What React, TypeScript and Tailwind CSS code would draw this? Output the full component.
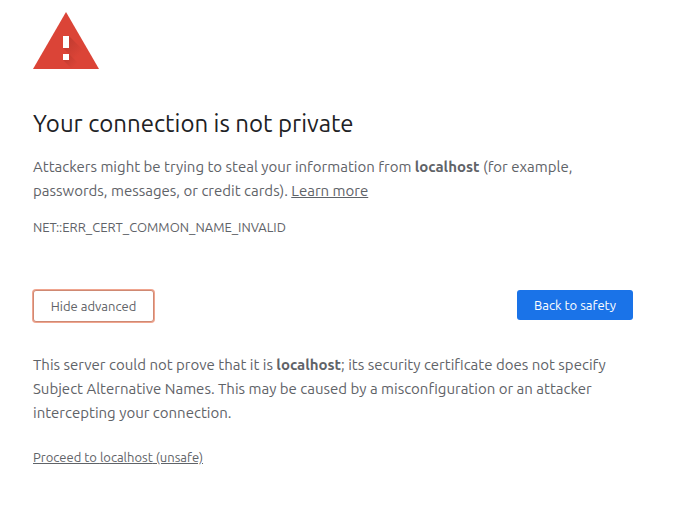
import React, { useState } from 'react';

const HOST = 'localhost';

function WarningIcon() {
  return (
    <svg className="block w-[66px] h-[57px]" viewBox="0 0 66 57" aria-hidden="true">
      <defs>
        <linearGradient id="shade" gradientUnits="userSpaceOnUse" x1="33" y1="30" x2="46" y2="43">
          <stop offset="0" stopColor="#b8382d" />
          <stop offset="1" stopColor="#db4437" />
        </linearGradient>
        <linearGradient id="shadeDot" gradientUnits="userSpaceOnUse" x1="33" y1="45" x2="42" y2="54">
          <stop offset="0" stopColor="#b8382d" />
          <stop offset="1" stopColor="#db4437" />
        </linearGradient>
      </defs>
      <path d="M33 0 66 57H0Z" fill="#db4437" />
      <path d="M36 24 54 42V54H48L30 36Z" fill="url(#shade)" opacity="0.7" />
      <path d="M36 42 51 57H39L30 48Z" fill="url(#shadeDot)" opacity="0.7" />
      <path d="M30 24h6v12h-6zM30 42h6v6h-6z" fill="#fff" />
    </svg>
  );
}

export default function App() {
  const [showDetails, setShowDetails] = useState(true);

  return (
    <div
      className="min-h-screen bg-white pt-3 pb-10 pl-[33px] pr-[47px] text-[15px] leading-6 text-[#5f6368]"
      style={{ fontFamily: 'Ubuntu, "Noto Sans", sans-serif' }}
    >
      <main className="max-w-[600px]">
        <WarningIcon />
        <h1 className="mt-10 text-2xl leading-[30px] text-[#202124]">Your connection is not private</h1>
        <p className="mt-4">
          Attackers might be trying to steal your information from <strong>{HOST}</strong> (for example,{' '}
          passwords, messages, or credit cards).{' '}
          <a href="#learn-more" className="underline">Learn more</a>
        </p>
        <div className="mt-[14px] text-[13px] leading-5">NET::ERR_CERT_COMMON_NAME_INVALID</div>

        <div className="mt-[53px] flex items-start justify-between text-[13px] leading-5">
          <button
            type="button"
            aria-expanded={showDetails}
            onClick={() => setShowDetails(!showDetails)}
            className="h-8 w-[121px] rounded-[3px] border border-[#cf8973] bg-white ring-1 ring-[#f0a58f]"
          >
            {showDetails ? 'Hide advanced' : 'Advanced'}
          </button>
          <button type="button" className="h-[30px] w-[116px] rounded-[3px] bg-[#1a73e8] text-white">
            Back to safety
          </button>
        </div>

        {showDetails && (
          <div className="mt-[31px]">
            <p>
              This server could not prove that it is <strong>{HOST}</strong>; its security certificate does not specify
              Subject Alternative Names. This may be caused by a misconfiguration or an attacker
              intercepting your connection.
            </p>
            <p className="mt-5 text-[13px]">
              <a href="#proceed" className="underline">Proceed to {HOST} (unsafe)</a>
            </p>
          </div>
        )}
      </main>
    </div>
  );
}
